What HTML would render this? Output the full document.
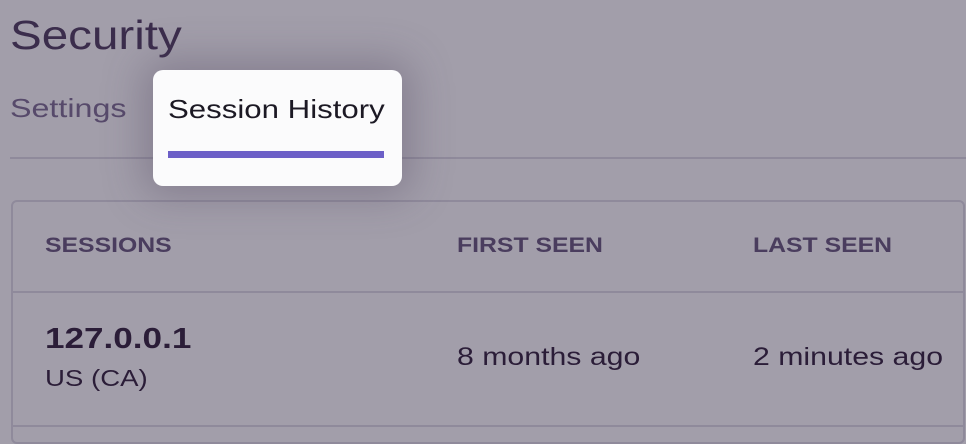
<!DOCTYPE html>
<html><head><style>
body{margin:0;width:966px;height:430px;background:#a29eaa;font-family:"Liberation Sans",sans-serif;position:relative;overflow:hidden}
div{position:absolute}
.t{white-space:nowrap;transform-origin:0 50%}
</style></head><body>
<div class="t" style="left:10px;top:10px;font-size:41px;color:#3b2d4c;line-height:50px;transform:scaleX(1.16)">Security</div>
<div class="t" style="left:10px;top:92px;font-size:26px;color:#574a6b;line-height:32px;transform:scaleX(1.24)">Settings</div>
<div style="left:10px;top:157px;width:956px;height:2px;background:#8f8a9b"></div>
<div style="left:11px;top:200px;width:950px;height:240px;border:2px solid #8f8a9b;border-radius:6px"></div>
<div style="left:13px;top:291px;width:952px;height:2px;background:#8f8a9b"></div>
<div style="left:13px;top:425px;width:952px;height:2px;background:#8f8a9b"></div>
<div style="left:153px;top:70px;width:249px;height:116px;background:#fbfbfc;border-radius:10px;box-shadow:0 0 40px 10px rgba(80,70,95,0.35)"></div>
<div class="t" style="left:168px;top:93px;font-size:26px;color:#1c1924;line-height:32px;transform:scaleX(1.2)">Session History</div>
<div style="left:168px;top:151px;width:216px;height:7px;background:#6c5fc7"></div>
<div class="t" style="left:45px;top:234px;font-size:21px;font-weight:bold;color:#4a3d5e;line-height:24px;transform:scaleX(1.18)">SESSIONS</div>
<div class="t" style="left:457px;top:234px;font-size:21px;font-weight:bold;color:#4a3d5e;line-height:24px;transform:scaleX(1.18)">FIRST SEEN</div>
<div class="t" style="left:753px;top:234px;font-size:21px;font-weight:bold;color:#4a3d5e;line-height:24px;transform:scaleX(1.18)">LAST SEEN</div>
<div class="t" style="left:45px;top:322px;font-size:29px;font-weight:bold;color:#2b1d38;line-height:34px;transform:scaleX(1.21)">127.0.0.1</div>
<div class="t" style="left:45px;top:364px;font-size:23px;color:#2b1d38;line-height:28px;transform:scaleX(1.2)">US (CA)</div>
<div class="t" style="left:457px;top:342px;font-size:25px;color:#2b1d38;line-height:30px;transform:scaleX(1.21)">8 months ago</div>
<div class="t" style="left:753px;top:342px;font-size:25px;color:#2b1d38;line-height:30px;transform:scaleX(1.21)">2 minutes ago</div>
</body></html>
